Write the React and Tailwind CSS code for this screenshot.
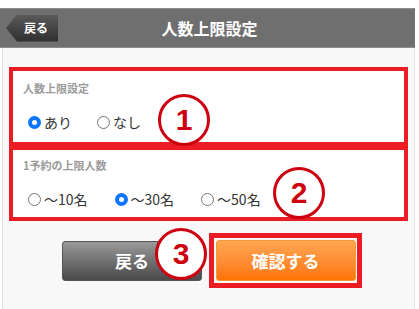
import React from 'react';

const jp = { fontFamily: '"Noto Sans CJK JP", "Noto Sans", sans-serif' };

const Radio = ({ checked }) =>
    checked ? (
        <span className="inline-block w-[13px] h-[13px] rounded-full border-[4px] border-[#0a75ff] bg-white shrink-0"></span>
    ) : (
        <span className="inline-block w-[13px] h-[13px] rounded-full border border-[#767676] bg-white shrink-0"></span>
    );

const Option = ({ checked, label, className }) => (
    <label className={`flex items-center gap-[3px] text-[14px] text-[#333] ${className}`}>
        <Radio checked={checked} />
        <span>{label}</span>
    </label>
);

const Mark = ({ n, className }) => (
    <div
        className={`absolute w-[52px] h-[52px] rounded-full border-[3px] border-[#cc0010] bg-white flex items-center justify-center text-[#cc0010] text-[30px] font-bold leading-none ${className}`}
        style={{ fontFamily: '"Liberation Sans", Arial, sans-serif' }}
    >
        {n}
    </div>
);

const App = () => {
    return (
        <div className="w-[419px] h-[309px] bg-white overflow-hidden relative" style={jp}>
            <div className="h-[8px]"></div>

            {/* header */}
            <div className="w-[415px] h-[40px] bg-[#6f6f6f] border-t border-b border-[#8c8c8c] grid grid-cols-[1fr_auto_1fr] items-center">
                <div className="pl-[6px] flex">
                    <div className="w-[52px] h-[27px] bg-gradient-to-b from-[#5a5a5a] to-[#2f2f2f] [clip-path:polygon(11px_0,100%_0,100%_100%,11px_100%,0_50%)] flex items-center justify-end pr-[10px]">
                        <span className="text-white text-[12px] font-bold leading-none">戻る</span>
                    </div>
                </div>
                <div className="text-white text-[16px] font-bold leading-none pl-[4px]">人数上限設定</div>
                <div></div>
            </div>

            {/* body */}
            <div className="ml-[2px] w-[413px] h-[261px] bg-[#f8f8f8] border-l border-r border-[#e2e2e2] pt-[19px] pl-[6px]">
                <div className="w-[399px] h-[79px] bg-white border-[4px] border-[#ec1c24] pl-[10px] pt-[9px]">
                    <div className="text-[11px] font-bold text-[#9a9a9a] leading-[16px]">人数上限設定</div>
                    <div className="flex items-center mt-[16px] pl-[5px]">
                        <Option checked label="あり" />
                        <Option label="なし" className="ml-[25px]" />
                    </div>
                </div>
                <div className="w-[399px] h-[75px] bg-white border-[4px] border-[#ec1c24] pl-[10px] pt-[7px]">
                    <div className="text-[11px] font-bold text-[#9a9a9a] leading-[16px]">1予約の上限人数</div>
                    <div className="flex items-center mt-[16px] pl-[5px]">
                        <Option label="～10名" />
                        <Option checked label="～30名" className="ml-[27px]" />
                        <Option label="～50名" className="ml-[27px]" />
                    </div>
                </div>

                <div className="flex items-center mt-[12px] pl-[53px]">
                    <button className="w-[140px] h-[40px] mt-[1px] rounded-[3px] border border-[#555] bg-gradient-to-b from-[#9a9a9a] to-[#4a4a4a] text-white text-[17px] font-bold">
                        戻る
                    </button>
                    <div className="ml-[7px] w-[153px] h-[55px] border-[5px] border-[#ec1c24] flex items-center justify-center">
                        <button className="w-[140px] h-[41px] rounded-[3px] border border-[#f29a3a] bg-gradient-to-b from-[#ffa650] to-[#ff7400] text-white text-[17px] font-bold">
                            確認する
                        </button>
                    </div>
                </div>
            </div>

            <Mark n="1" className="left-[158px] top-[94px]" />
            <Mark n="2" className="left-[273px] top-[167px]" />
            <Mark n="3" className="left-[155px] top-[228px]" />
        </div>
    );
};

export default App;
